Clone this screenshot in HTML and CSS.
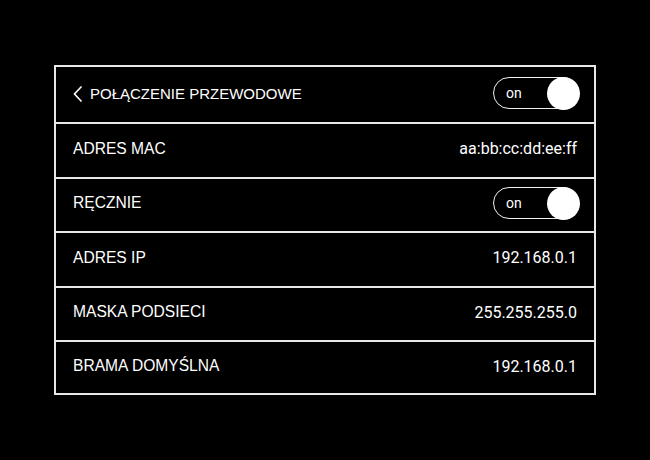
FILE: index.html
```html
<!DOCTYPE html>
<html lang="pl">
<head>
<meta charset="utf-8">
<link rel="stylesheet" href="styles.css">
</head>
<body>
<div class="panel">
  <div class="row row-head">
    <div class="title">
      <svg class="chev" width="12" height="18" viewBox="0 0 12 18"><path d="M9.5 1.5 L2.5 9 L9.5 16.5" fill="none" stroke="#fff" stroke-width="1.6"/></svg>
      <span class="label">POŁĄCZENIE PRZEWODOWE</span>
    </div>
    <div class="toggle"><span class="tog-text">on</span><span class="knob"></span></div>
  </div>
  <div class="row">
    <span class="label">ADRES MAC</span>
    <span class="value">aa:bb:cc:dd:ee:ff</span>
  </div>
  <div class="row">
    <span class="label">RĘCZNIE</span>
    <div class="toggle"><span class="tog-text">on</span><span class="knob"></span></div>
  </div>
  <div class="row">
    <span class="label">ADRES IP</span>
    <span class="value">192.168.0.1</span>
  </div>
  <div class="row">
    <span class="label">MASKA PODSIECI</span>
    <span class="value">255.255.255.0</span>
  </div>
  <div class="row row-last">
    <span class="label">BRAMA DOMYŚLNA</span>
    <span class="value">192.168.0.1</span>
  </div>
</div>
</body>
</html>
```

FILE: styles.css
```css
html, body {
  margin: 0;
  padding: 0;
  background: #000;
  width: 650px;
  height: 460px;
  overflow: hidden;
}
.panel {
  margin: 65px 0 0 54px;
  width: 538px;
  border: 2px solid #e8e8e8;
  display: flex;
  flex-direction: column;
}
.row {
  height: 52.5px;
  border-top: 2px solid #e8e8e8;
  display: flex;
  align-items: center;
  justify-content: space-between;
  padding: 0 16px 0 17px;
}
.row-head {
  height: 55px;
  border-top: none;
  padding-left: 16px;
}
.row-last {
  height: 51px;
}
.title {
  display: flex;
  align-items: center;
  gap: 6px;
}
.chev {
  display: block;
  margin-top: -1px;
}
.label {
  font-family: "Liberation Sans", Arial, sans-serif;
  font-size: 15.6px;
  color: #fff;
  margin-top: -3px;
}
.title .label {
  font-size: 15px;
  margin-top: -2px;
}
.value {
  font-family: Roboto, "Liberation Sans", sans-serif;
  font-size: 16px;
  color: #fff;
  margin-right: 1px;
  margin-top: -3px;
}
.toggle {
  width: 84px;
  height: 30px;
  border: 1.5px solid #f0f0f0;
  border-radius: 17px;
  display: flex;
  align-items: center;
  justify-content: space-between;
  margin-top: -3px;
  margin-right: -1px;
}
.tog-text {
  font-family: Roboto, sans-serif;
  font-size: 14px;
  color: #fff;
  margin-left: 12px;
  margin-top: -1px;
}
.knob {
  width: 33px;
  height: 33px;
  border-radius: 50%;
  background: #fff;
  margin-right: -1.5px;
}
```
